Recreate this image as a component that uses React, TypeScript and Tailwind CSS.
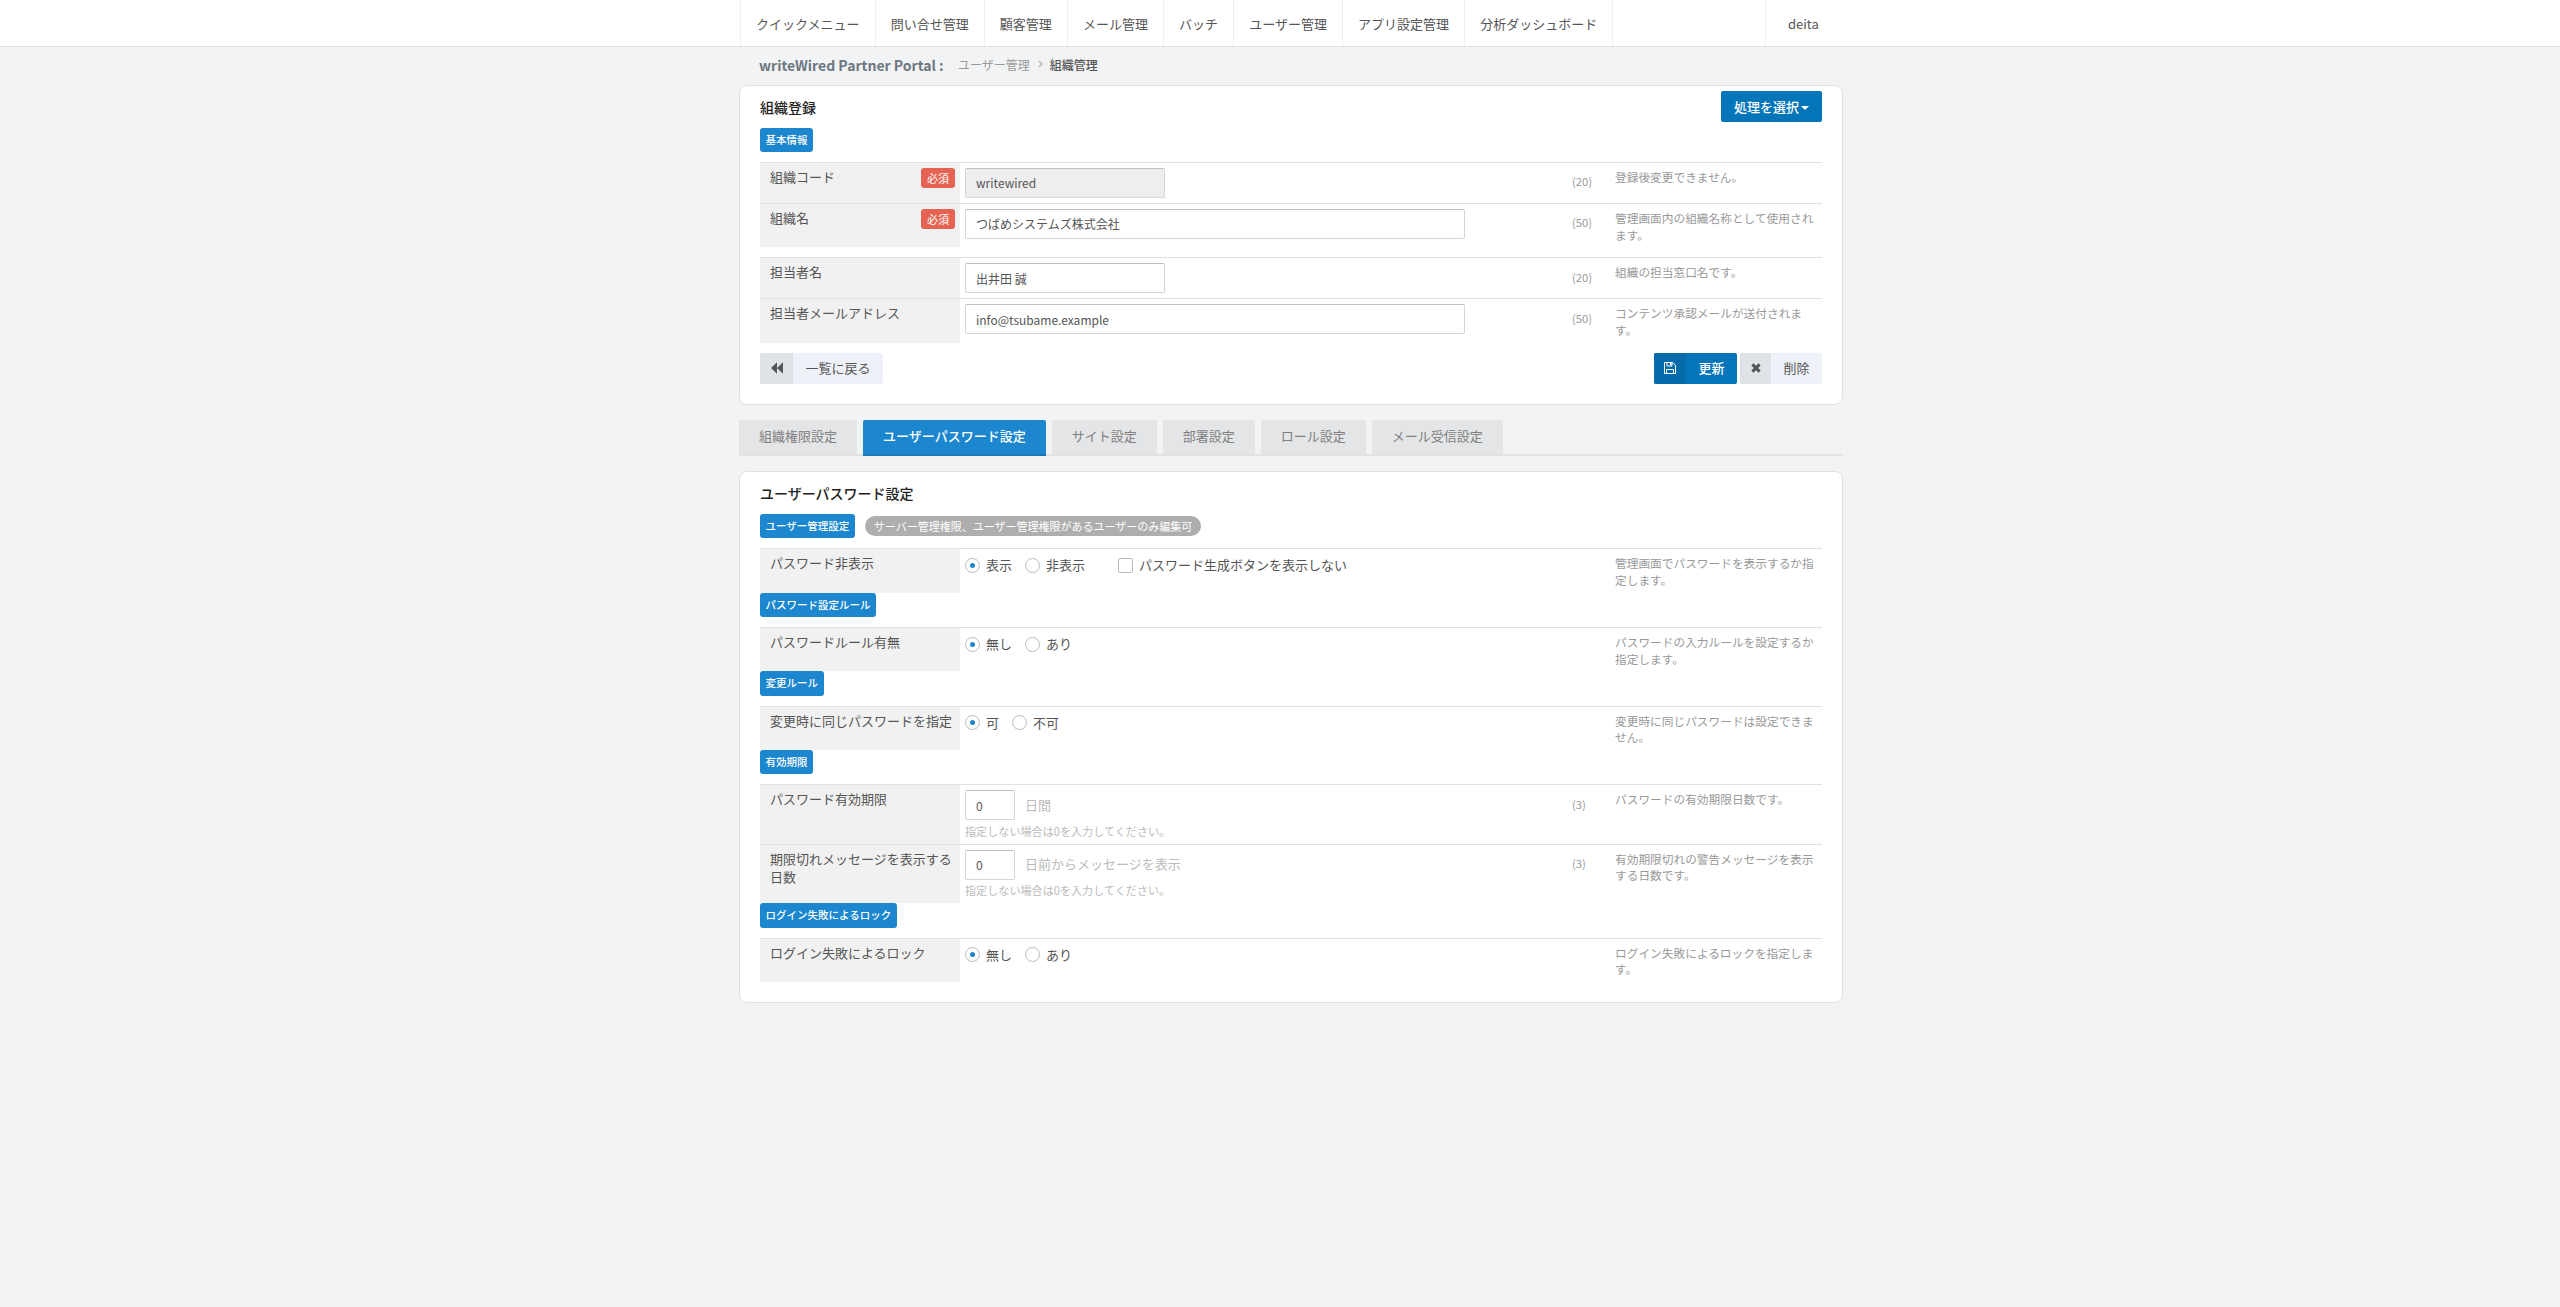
import React, { useState } from 'react';

const NAV_ITEMS = [
  'クイックメニュー',
  '問い合せ管理',
  '顧客管理',
  'メール管理',
  'バッチ',
  'ユーザー管理',
  'アプリ設定管理',
  '分析ダッシュボード',
];

const TABS = [
  '組織権限設定',
  'ユーザーパスワード設定',
  'サイト設定',
  '部署設定',
  'ロール設定',
  'メール受信設定',
];

function SaveIcon() {
  return (
    <svg viewBox="0 0 12 12" className="w-3 h-3" fill="none" stroke="currentColor" strokeWidth="1">
      <path d="M0.5 0.5h8.2l2.8 2.8v8.2h-11z" />
      <path d="M2.5 11.5v-4h7v4" />
      <path d="M3 0.5v3.5h5v-3.5" />
      <path d="M6 1h1.5v2.2h-1.5z" fill="currentColor" stroke="none" />
    </svg>
  );
}

function BackwardIcon() {
  return (
    <svg viewBox="0 0 12 12" className="w-3 h-3" fill="currentColor">
      <path d="M6 0.3v11.4l-6 -5.7zM12 0.3v11.4l-6 -5.7z" />
    </svg>
  );
}

function CrossIcon() {
  return (
    <svg viewBox="0 0 10 10" className="w-[10px] h-[10px]" fill="none" stroke="currentColor" strokeWidth="3">
      <path d="M1.4 1.4l7.2 7.2M8.6 1.4l-7.2 7.2" />
    </svg>
  );
}

function SectionLabel({ children }: { children: React.ReactNode }) {
  return (
    <div className="h-[34.17px] flex items-start">
      <span className="inline-flex items-center h-[24.17px] px-[5.5px] rounded-[3px] bg-[#1c87cf] text-white text-[10.5px] font-medium whitespace-nowrap">
        {children}
      </span>
    </div>
  );
}

interface FieldRowProps {
  label: string;
  height: string;
  required?: boolean;
  count?: string;
  help: string;
  children: React.ReactNode;
}

function FieldRow({ label, height, required, count, help, children }: FieldRowProps) {
  return (
    <div className={`flex border-t border-[#e1e1e1] ${height}`}>
      <div className="w-[200px] shrink-0 bg-[#f1f1f1] pl-[10px] pr-[5px] pt-[5px] flex justify-between items-start">
        <span>{label}</span>
        {required && (
          <span className="h-5 w-[34px] shrink-0 flex items-center justify-center rounded-[3px] bg-[#e56353] text-white text-[11px]">必須</span>
        )}
      </div>
      <div className="w-[607px] shrink-0 pl-[5px] pt-[5px]">{children}</div>
      <div className="w-[48px] shrink-0 pl-[5px] pt-[10.4px] text-[11.2px] leading-[16.71px] text-[#999]">{count}</div>
      <div className="w-[207px] shrink-0 pt-[6px] text-[11.7px] leading-[16.71px] text-[#999]">{help}</div>
    </div>
  );
}

function TextInput({ value, width, disabled }: { value: string; width: string; disabled?: boolean }) {
  const [text, setText] = useState(value);
  return (
    <input
      type="text"
      value={text}
      disabled={disabled}
      onChange={(e) => setText(e.target.value)}
      className={`block h-[30px] px-[10px] text-[12px] rounded-[2px] border border-[#d5d5d5] border-t-[#c0c0c0] outline-none ${width} ${disabled ? 'bg-[#eee]' : 'bg-white'}`}
    />
  );
}

function RadioGroup({ options }: { options: string[] }) {
  const [selected, setSelected] = useState(options[0]);
  return (
    <div className="flex gap-[13px] pt-[2px]">
      {options.map((option) => (
        <div key={option} onClick={() => setSelected(option)} className="flex items-center gap-[6px] cursor-pointer">
          <span className="w-[15px] h-[15px] rounded-full border border-[#bbb] bg-white flex items-center justify-center">
            {selected === option && <span className="w-[5px] h-[5px] rounded-full bg-[#1c87cf]" />}
          </span>
          <span>{option}</span>
        </div>
      ))}
    </div>
  );
}

function NumberField({ suffix }: { suffix: string }) {
  return (
    <>
      <div className="flex items-center">
        <TextInput value="0" width="w-[50px]" />
        <span className="ml-[10px] text-[#bbb]">{suffix}</span>
      </div>
      <div className="mt-[1.5px] text-[11.1px] leading-[18px] text-[#bbb]">指定しない場合は0を入力してください。</div>
    </>
  );
}

export default function App() {
  const [activeTab, setActiveTab] = useState(TABS[1]);

  return (
    <div className="min-h-[1307px] bg-[#f1f3f5] text-[#555] text-[13px] leading-[18.57px] font-['Noto_Sans_CJK_JP',sans-serif]">
      <header className="bg-white border-b border-[#e1e1e1]">
        <nav className="w-[1104px] ml-[739px] h-[46px] pl-px flex">
          <div className="flex border-l border-[#eee]">
            {NAV_ITEMS.map((item) => (
              <a key={item} className="flex items-center px-[15.07px] pt-[2px] border-r border-[#eee]">{item}</a>
            ))}
          </div>
          <a className="ml-auto w-[78px] flex items-center pl-[22px] pt-[2px] border-l border-[#eee]">deita</a>
        </nav>
      </header>

      <main className="w-[1104px] ml-[739px]">
        <div className="h-[38px] pl-[20px] pb-px flex items-center">
          <h1 className="text-[14px] font-bold text-[#6c7780] w-[199px] whitespace-nowrap">writeWired Partner Portal :</h1>
          <span className="text-[12px] text-[#999]">ユーザー管理</span>
          <svg viewBox="0 0 6 8" className="w-[6px] h-2 ml-2 mr-[6px] mb-[3px] text-[#bbb]" fill="none" stroke="currentColor" strokeWidth="1.5">
            <path d="M1 1l3 3l-3 3" />
          </svg>
          <span className="text-[12px] font-medium text-[#555]">組織管理</span>
        </div>

        <section className="h-[320px] bg-white border border-[#e1e1e1] rounded-[8px] px-5 pt-[5px]">
          <div className="flex justify-between h-[36.73px]">
            <h2 className="text-[14px] font-medium text-[#222] mt-[7px]">組織登録</h2>
            <button className="w-[101px] h-[31px] pt-[1.5px] rounded-[2px] bg-[#0575ba] text-white font-medium flex items-center justify-center gap-[2px]">
              処理を選択
              <svg viewBox="0 0 8 4" className="w-2 h-1 mt-px" fill="currentColor"><path d="M0 0h8l-4 4z" /></svg>
            </button>
          </div>
          <SectionLabel>基本情報</SectionLabel>
          <FieldRow label="組織コード" height="h-[41px]" required count="(20)" help="登録後変更できません。">
            <TextInput value="writewired" width="w-[200px]" disabled />
          </FieldRow>
          <FieldRow label="組織名" height="h-[44.43px]" required count="(50)" help="管理画面内の組織名称として使用されます。">
            <TextInput value="つばめシステムズ株式会社" width="w-[500px]" />
          </FieldRow>
          <div className="h-[10px]" />
          <FieldRow label="担当者名" height="h-[41px]" count="(20)" help="組織の担当窓口名です。">
            <TextInput value="出井田 誠" width="w-[200px]" />
          </FieldRow>
          <FieldRow label="担当者メールアドレス" height="h-[44.43px]" count="(50)" help="コンテンツ承認メールが送付されます。">
            <TextInput value="info@tsubame.example" width="w-[500px]" />
          </FieldRow>

          <div className="mt-[10px] flex h-[31px]">
            <button className="flex rounded-[2px] overflow-hidden bg-[#eef1f7]">
              <span className="w-[33px] h-full flex items-center justify-center bg-[#dfe2e7]"><BackwardIcon /></span>
              <span className="w-[90px] h-full flex items-center justify-center">一覧に戻る</span>
            </button>
            <button className="ml-auto flex rounded-[2px] overflow-hidden bg-[#0575ba] text-white font-medium">
              <span className="w-[32px] h-full flex items-center justify-center bg-[#056bab]"><SaveIcon /></span>
              <span className="w-[51px] h-full flex items-center justify-center">更新</span>
            </button>
            <button className="ml-[3px] flex rounded-[2px] overflow-hidden bg-[#eef1f7]">
              <span className="w-[31px] h-full flex items-center justify-center bg-[#dfe2e7]"><CrossIcon /></span>
              <span className="w-[51px] h-full flex items-center justify-center">削除</span>
            </button>
          </div>
        </section>

        <div className="mt-[15px] h-[36px] flex gap-[6px] border-b-2 border-[#e1e2e4]">
          {TABS.map((tab) => (
            <button
              key={tab}
              onClick={() => setActiveTab(tab)}
              className={`px-5 pb-px rounded-t-[2px] ${tab === activeTab ? 'h-[36px] bg-[#1c87cf] text-white font-medium border-b-2 border-[#1a78b9]' : 'h-[34px] bg-[#e4e5e7] text-[#808080]'}`}
            >
              {tab}
            </button>
          ))}
        </div>

        <section className="mt-[15px] h-[532px] bg-white border border-[#e1e1e1] rounded-[8px] px-5 pt-[12px]">
          <h2 className="text-[14px] font-medium text-[#222] h-[30.28px]">ユーザーパスワード設定</h2>
          <div className="flex items-start">
            <SectionLabel>ユーザー管理設定</SectionLabel>
            <span className="ml-[10px] mt-[2px] h-5 px-[9px] rounded-full bg-[#aeaeae] text-white text-[11px] flex items-center">
              サーバー管理権限、ユーザー管理権限があるユーザーのみ編集可
            </span>
          </div>
          <FieldRow label="パスワード非表示" height="h-[44.43px]" help="管理画面でパスワードを表示するか指定します。">
            <div className="flex">
              <RadioGroup options={['表示', '非表示']} />
              <label className="ml-[33px] pt-[2px] flex items-center gap-[6px]">
                <span className="w-[15px] h-[15px] rounded-[2px] border border-[#bbb] bg-white" />
                パスワード生成ボタンを表示しない
              </label>
            </div>
          </FieldRow>
          <SectionLabel>パスワード設定ルール</SectionLabel>
          <FieldRow label="パスワードルール有無" height="h-[44.43px]" help="パスワードの入力ルールを設定するか指定します。">
            <RadioGroup options={['無し', 'あり']} />
          </FieldRow>
          <SectionLabel>変更ルール</SectionLabel>
          <FieldRow label="変更時に同じパスワードを指定" height="h-[44.43px]" help="変更時に同じパスワードは設定できません。">
            <RadioGroup options={['可', '不可']} />
          </FieldRow>
          <SectionLabel>有効期限</SectionLabel>
          <FieldRow label="パスワード有効期限" height="h-[59.6px]" count="(3)" help="パスワードの有効期限日数です。">
            <NumberField suffix="日間" />
          </FieldRow>
          <FieldRow label="期限切れメッセージを表示する日数" height="h-[59.6px]" count="(3)" help="有効期限切れの警告メッセージを表示する日数です。">
            <NumberField suffix="日前からメッセージを表示" />
          </FieldRow>
          <SectionLabel>ログイン失敗によるロック</SectionLabel>
          <FieldRow label="ログイン失敗によるロック" height="h-[44.43px]" help="ログイン失敗によるロックを指定します。">
            <RadioGroup options={['無し', 'あり']} />
          </FieldRow>
        </section>
      </main>
    </div>
  );
}
